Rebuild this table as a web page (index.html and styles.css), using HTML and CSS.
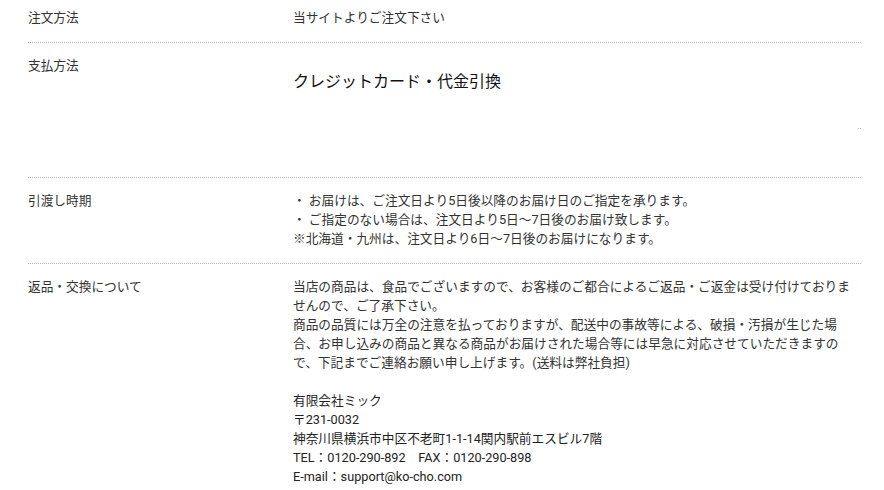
FILE: index.html
```html
<!DOCTYPE html>
<html lang="ja">
<head>
<meta charset="utf-8">
<link rel="stylesheet" href="styles.css">
</head>
<body>

<div class="guide">

  <div class="row">
    <div class="label">注文方法</div>
    <div class="value">当サイトよりご注文下さい</div>
  </div>

  <div class="row">
    <div class="label">支払方法</div>
    <div class="value">
      <p class="pay">クレジットカード・代金引換</p>
      <div class="pay-rule"></div>
    </div>
  </div>

  <div class="row">
    <div class="label">引渡し時期</div>
    <div class="value">
      ・ お届けは、ご注文日より5日後以降のお届け日のご指定を承ります。<br>
      ・ ご指定のない場合は、注文日より5日～7日後のお届け致します。<br>
      ※北海道・九州は、注文日より6日～7日後のお届けになります。
    </div>
  </div>

  <div class="row">
    <div class="label">返品・交換について</div>
    <div class="value">
      <p>当店の商品は、食品でございますので、お客様のご都合によるご返品・ご返金は受け付けておりませんので、ご了承下さい。<br>
      商品の品質には万全の注意を払っておりますが、配送中の事故等による、破損・汚損が生じた場合、お申し込みの商品と異なる商品がお届けされた場合等には早急に対応させていただきますので、下記までご連絡お願い申し上げます。(送料は弊社負担)</p>
      <p class="company">有限会社ミック<br>
      〒231-0032<br>
      神奈川県横浜市中区不老町1-1-14関内駅前エスビル7階<br>
      TEL：0120-290-892　FAX：0120-290-898<br>
      E-mail：support@ko-cho.com</p>
    </div>
  </div>

</div>

</body>
</html>
```

FILE: styles.css
```css
body {
    margin: 0;
    background: #fff;
    color: #333;
    font-family: Roboto, "Noto Sans CJK JP", sans-serif;
    font-size: 12.7px;
    line-height: 19px;
}

.guide {
    width: 833px;
    margin: -5px 0 0 28px;
}

.row {
    display: grid;
    grid-template-columns: 265px 1fr;
    padding: 13px 0 15px;
    border-bottom: 1px dotted #bbb;
}

.label {
    color: #333;
}

.value {
    padding-right: 8px;
}

.value p {
    margin: 0;
}

.value .pay {
    margin-top: 14px;
    font-size: 16px;
    line-height: 24px;
    color: #111;
}

.pay-rule {
    width: 3px;
    margin: 34px -8px 33px auto;
    border-top: 1px dotted #bbb;
}

.value .company {
    margin-top: 19px;
    color: #222;
}
```
